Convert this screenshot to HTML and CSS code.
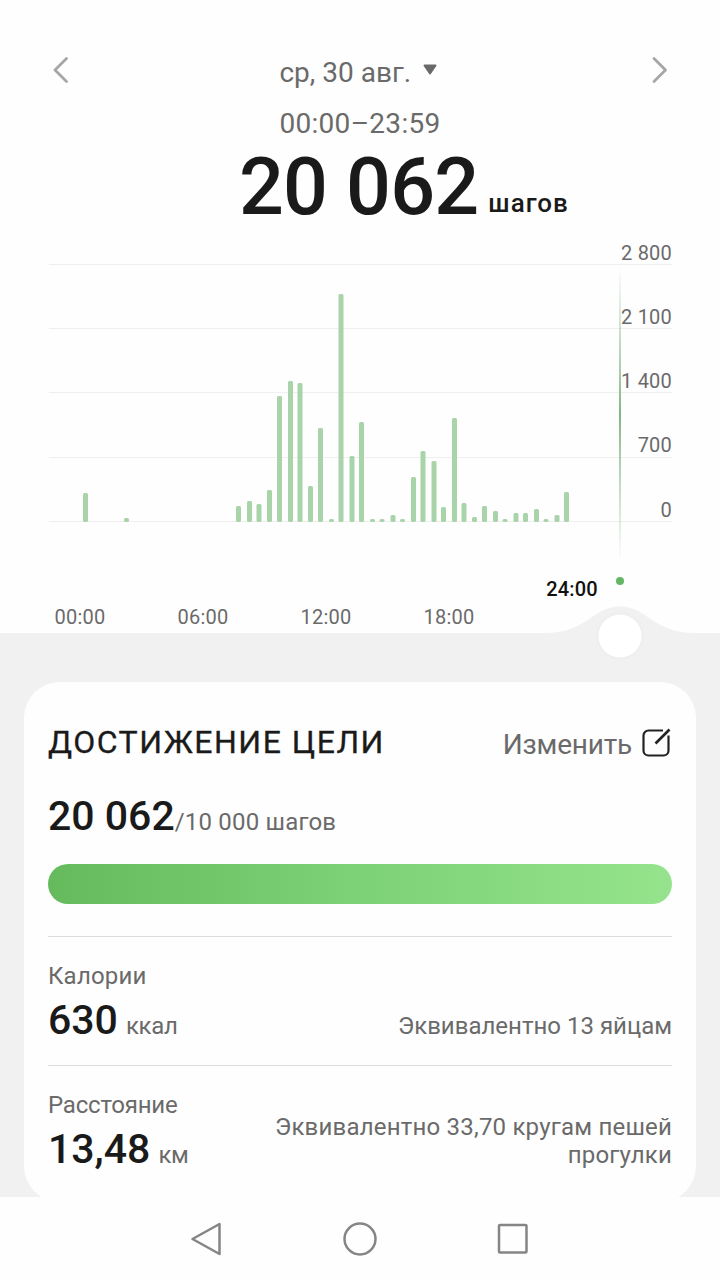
FILE: index.html
```html
<!DOCTYPE html>
<html lang="ru">
<head>
  <meta charset="UTF-8">
  <title>Шаги</title>
  <link rel="stylesheet" href="styles.css">
</head>
<body>
  <!-- Date and total -->
  <div class="header">
    <svg class="arrow" viewBox="0 0 16 28"><path d="M14.500 2.500L3 14L14.500 25.500" /></svg>
    <div class="period">
      <div class="date">
        <span>ср, 30 авг.</span>
        <svg class="caret" viewBox="0 0 16 12"><path d="M2.500 1.500h11L8 9.500z" /></svg>
      </div>
      <div class="hours">00:00–23:59</div>
    </div>
    <svg class="arrow" viewBox="0 0 16 28"><path d="M2 2.500L13.500 14L2 25.500" /></svg>
  </div>
  <div class="total"><span class="total-value">20 062</span><span class="total-unit">шагов</span></div>

  <!-- Steps chart -->
  <svg class="chart" viewBox="0 0 720 450">
    <defs>
      <linearGradient id="cursor" x1="0" y1="0" x2="0" y2="1">
        <stop offset="0" stop-color="#8fc08f" stop-opacity="0" />
        <stop offset="0.5" stop-color="#82b684" />
        <stop offset="1" stop-color="#8fc08f" stop-opacity="0" />
      </linearGradient>
    </defs>
    <path class="grid" d="M49 32.500H672M49 96.500H672M49 160.500H672M49 225.500H672M49 289.500H672" />
    <g id="bars"></g>
    <rect x="619" y="34" width="2" height="296" fill="url(#cursor)" />
    <g class="axis axis-y">
      <text x="672" y="28">2 800</text>
      <text x="672" y="92">2 100</text>
      <text x="672" y="156">1 400</text>
      <text x="672" y="220">700</text>
      <text x="672" y="285">0</text>
    </g>
    <g class="axis axis-x">
      <text x="80" y="392">00:00</text>
      <text x="203" y="392">06:00</text>
      <text x="326" y="392">12:00</text>
      <text x="449" y="392">18:00</text>
      <text class="current" x="572" y="364">24:00</text>
    </g>
    <circle cx="620" cy="349" r="4" fill="#62b765" />
    <!-- Slider -->
    <path class="wave" d="M0 401H545C588 401 592 374.500 620 374.500S652 401 695 401H720V450H0z" />
    <circle class="knob" cx="620" cy="404" r="21.500" />
  </svg>

  <!-- Goal card -->
  <div class="panel">
    <div class="card">
      <div class="card-head">
        <div class="card-title">ДОСТИЖЕНИЕ ЦЕЛИ</div>
        <div class="edit">
          <span>Изменить</span>
          <svg viewBox="0 0 30 30">
            <path d="M22 2.500H7.500A5 5 0 0 0 2.500 7.500V22.500A5 5 0 0 0 7.500 27.500H22.500A5 5 0 0 0 27.500 22.500V7.500" />
            <path class="pen" d="M14.500 15.500L28.500 1.500" />
          </svg>
        </div>
      </div>
      <div class="goal"><span class="value">20 062</span><span class="unit wide">/10 000 шагов</span></div>
      <div class="progress"></div>

      <div class="stat">
        <div>
          <div class="label wide">Калории</div>
          <div><span class="value">630</span><span class="unit gap">ккал</span></div>
        </div>
        <div class="note">Эквивалентно 13 яйцам</div>
      </div>
      <div class="stat">
        <div>
          <div class="label">Расстояние</div>
          <div><span class="value">13,48</span><span class="unit gap">км</span></div>
        </div>
        <div class="note wide">Эквивалентно 33,70 кругам пешей прогулки</div>
      </div>
    </div>
  </div>

  <!-- System navigation -->
  <div class="nav">
    <svg viewBox="0 0 36 36"><path d="M30.500 3V33L3.500 18z" /></svg>
    <svg viewBox="0 0 36 36"><circle cx="18" cy="18" r="15.500" /></svg>
    <svg viewBox="0 0 36 36"><rect x="4" y="4" width="27.500" height="27.500" rx="1" /></svg>
  </div>

  <script>
    // [x, bar height] for every half hour that has steps
    const steps = [
      [85.5, 29], [126.5, 4], [238.5, 16], [249.5, 21], [259, 18], [269.5, 32],
      [279.5, 126], [290.5, 141], [300, 139], [310.5, 36], [320.5, 94], [331.5, 3],
      [341, 228], [352, 66], [361.5, 100], [372.5, 3], [382, 3], [393, 7],
      [402.5, 3], [413.5, 45], [423, 71], [434, 61], [443.5, 15], [454.5, 104],
      [464, 19], [474.5, 5], [484.5, 16], [495.5, 11], [505, 3], [516, 9],
      [525.5, 9], [536.5, 13], [546, 3], [557, 7], [566.5, 30]
    ];
    document.getElementById("bars").innerHTML = steps.map(([x, h]) =>
      `<rect x="${x - 2.5}" y="${290 - h}" width="5" height="${h}" rx="1.5" />`
    ).join('');
  </script>
</body>
</html>
```

FILE: styles.css
```css
* {
  box-sizing: border-box;
}

body {
  font-family: Roboto, sans-serif;
  background: #fefefe;
  color: #1a1a1a;
  margin: 0;
  height: 1280px;
  overflow: hidden;
}

svg {
  display: block;
  fill: none;
}

.header {
  display: flex;
  justify-content: space-between;
  align-items: flex-start;
  height: 148px;
  padding: 53px 52px 0;
  color: #6a6a6a;
  font-size: 28px;
  line-height: 40px;
}

.arrow {
  width: 16px;
  height: 28px;
  margin-top: 3px;
  stroke: #a6a6a6;
  stroke-width: 2.8;
  stroke-linecap: round;
  stroke-linejoin: round;
}

.date {
  display: flex;
  gap: 11px;
  height: 51px;
}

.caret {
  width: 16px;
  height: 12px;
  margin-top: 11px;
  fill: #6a6a6a;
  stroke: #6a6a6a;
  stroke-width: 2;
  stroke-linejoin: round;
}

.hours {
  letter-spacing: 0.3px;
}

.total {
  display: flex;
  height: 84px;
  padding: 4px 0 0 239px;
  line-height: 70px;
}

.total-value {
  font-size: 79px;
  font-weight: 500;
  letter-spacing: -0.8px;
}

.total-unit {
  margin: 16px 0 0 10px;
  font-size: 26px;
  font-weight: 500;
  letter-spacing: 1px;
}

.chart {
  width: 720px;
  height: 450px;
}

.grid {
  stroke: #efefef;
}

#bars {
  fill: #a9d3a8;
}

.axis {
  font-size: 20px;
  letter-spacing: 0.2px;
  fill: #6a6a6a;
}

.axis-y {
  text-anchor: end;
}

.axis-x {
  text-anchor: middle;
}

.current {
  font-weight: 500;
  fill: #111;
}

.wave {
  fill: #f1f1f1;
}

.knob {
  fill: #fff;
  filter: drop-shadow(0 0 2px rgba(0, 0, 0, 0.03));
}

.panel {
  height: 515px;
  padding: 0 24px;
  background: #f1f1f1;
  overflow: hidden;
}

.card {
  height: 520px;
  padding: 40px 24px 0;
  background: #fefefe;
  border-radius: 36px;
}

.card-head {
  display: flex;
  justify-content: space-between;
  height: 72px;
  line-height: 40px;
}

.card-title {
  font-size: 32px;
  letter-spacing: 1.5px;
  -webkit-text-stroke: 0.3px #1a1a1a;
}

.edit {
  display: flex;
  gap: 9px;
  padding: 3px 1px 0 0;
  color: #6a6a6a;
  font-size: 28px;
  letter-spacing: -0.2px;
}

.edit svg {
  width: 30px;
  height: 30px;
  margin-top: 3px;
  stroke: #222;
  stroke-width: 2.2;
}

.edit .pen {
  stroke-width: 2.6;
}

.goal {
  height: 70px;
  line-height: 44px;
}

.value {
  font-size: 41px;
  font-weight: 500;
}

.unit {
  color: #6a6a6a;
  font-size: 24px;
}

.gap {
  margin-left: 8px;
  letter-spacing: -0.3px;
}

.progress {
  height: 40px;
  margin-bottom: 32px;
  border-radius: 20px;
  background: linear-gradient(90deg, #65bb5c, #7dd177 50%, #95e48d);
}

.stat {
  display: flex;
  justify-content: space-between;
  align-items: flex-end;
  height: 129px;
  padding-bottom: 12px;
  border-top: 1px solid #dcdcdc;
  line-height: 48px;
}

.label {
  margin-bottom: 4px;
  color: #6a6a6a;
  font-size: 24px;
  line-height: 32px;
  letter-spacing: -0.2px;
}

.note {
  width: 410px;
  padding-bottom: 13px;
  color: #6a6a6a;
  font-size: 24px;
  line-height: 28px;
  text-align: right;
}

.wide {
  letter-spacing: 0.2px;
}

.nav {
  display: flex;
  justify-content: center;
  gap: 117px;
  padding-top: 24px;
}

.nav svg {
  width: 36px;
  height: 36px;
  stroke: #858585;
  stroke-width: 2.5;
  stroke-linejoin: round;
}
```
